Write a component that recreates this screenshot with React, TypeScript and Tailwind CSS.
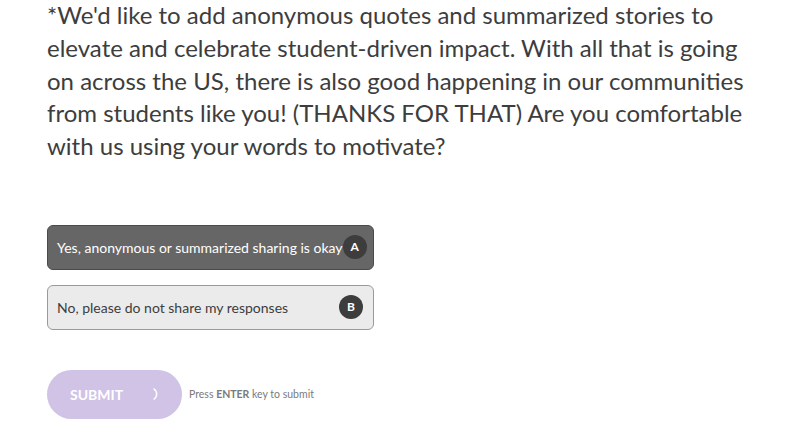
import React, { useState } from 'react';

interface Choice {
  key: string;
  label: string;
}

const choices: Choice[] = [
  { key: 'A', label: 'Yes, anonymous or summarized sharing is okay' },
  { key: 'B', label: 'No, please do not share my responses' },
];

const lines = [
  "*We'd like to add anonymous quotes and summarized stories to",
  'elevate and celebrate student-driven impact. With all that is going',
  'on across the US, there is also good happening in our communities',
  'from students like you! (THANKS FOR THAT) Are you comfortable',
  'with us using your words to motivate?',
];

export default function App() {
  const [selected, setSelected] = useState('A');

  return (
    <div className="w-[794px] h-[436px] overflow-hidden bg-white pl-[47px] font-['Lato',sans-serif]">
      {/* Question */}
      <h2 className="text-[24px] leading-[32.8px] text-[#3d3d3d] font-normal -mt-[1px]">
        {lines.map((l, i) => (
          <span key={i} className="block whitespace-nowrap">{l}</span>
        ))}
      </h2>

      {/* Choices */}
      <div className="mt-[62px] flex flex-col gap-[15px] w-[327px]">
        {choices.map((c) => {
          const active = selected === c.key;
          return (
            <button
              key={c.key}
              onClick={() => setSelected(c.key)}
              className={
                active
                  ? 'h-[45px] flex items-center justify-between pl-[9px] pr-[10px] rounded-[6px] border border-[#4a4a4a] bg-[#666666] text-white text-[14px]'
                  : 'h-[45px] flex items-center justify-between pl-[9px] pr-[10px] rounded-[6px] border border-[#9a9a9a] bg-[#ebebeb] text-[#3d3d3d] text-[14px]'
              }
            >
              <span className="whitespace-nowrap">{c.label}</span>
              <span className="w-6 h-6 rounded-full bg-[#3d3d3d] text-white text-[12px] font-bold flex items-center justify-center shrink-0">
                {c.key}
              </span>
            </button>
          );
        })}
      </div>

      {/* Submit */}
      <div className="mt-10 flex items-center gap-[7px]">
        <button className="w-[135px] h-[49px] rounded-full bg-[#d0c3e6] flex items-center pl-[23px] pr-[22px] justify-between text-white text-[14px] font-bold">
          <span>SUBMIT</span>
          <svg width="10" height="14" viewBox="0 0 10 14">
            <path d="M4 2 A6 6 0 0 1 4 12" fill="none" stroke="#ffffff" strokeWidth="1.5" strokeLinecap="round" />
          </svg>
        </button>
        <span className="text-[10.5px] text-[#7a7a7a]">
          Press <span className="font-bold">ENTER</span> key to submit
        </span>
      </div>
    </div>
  );
}
